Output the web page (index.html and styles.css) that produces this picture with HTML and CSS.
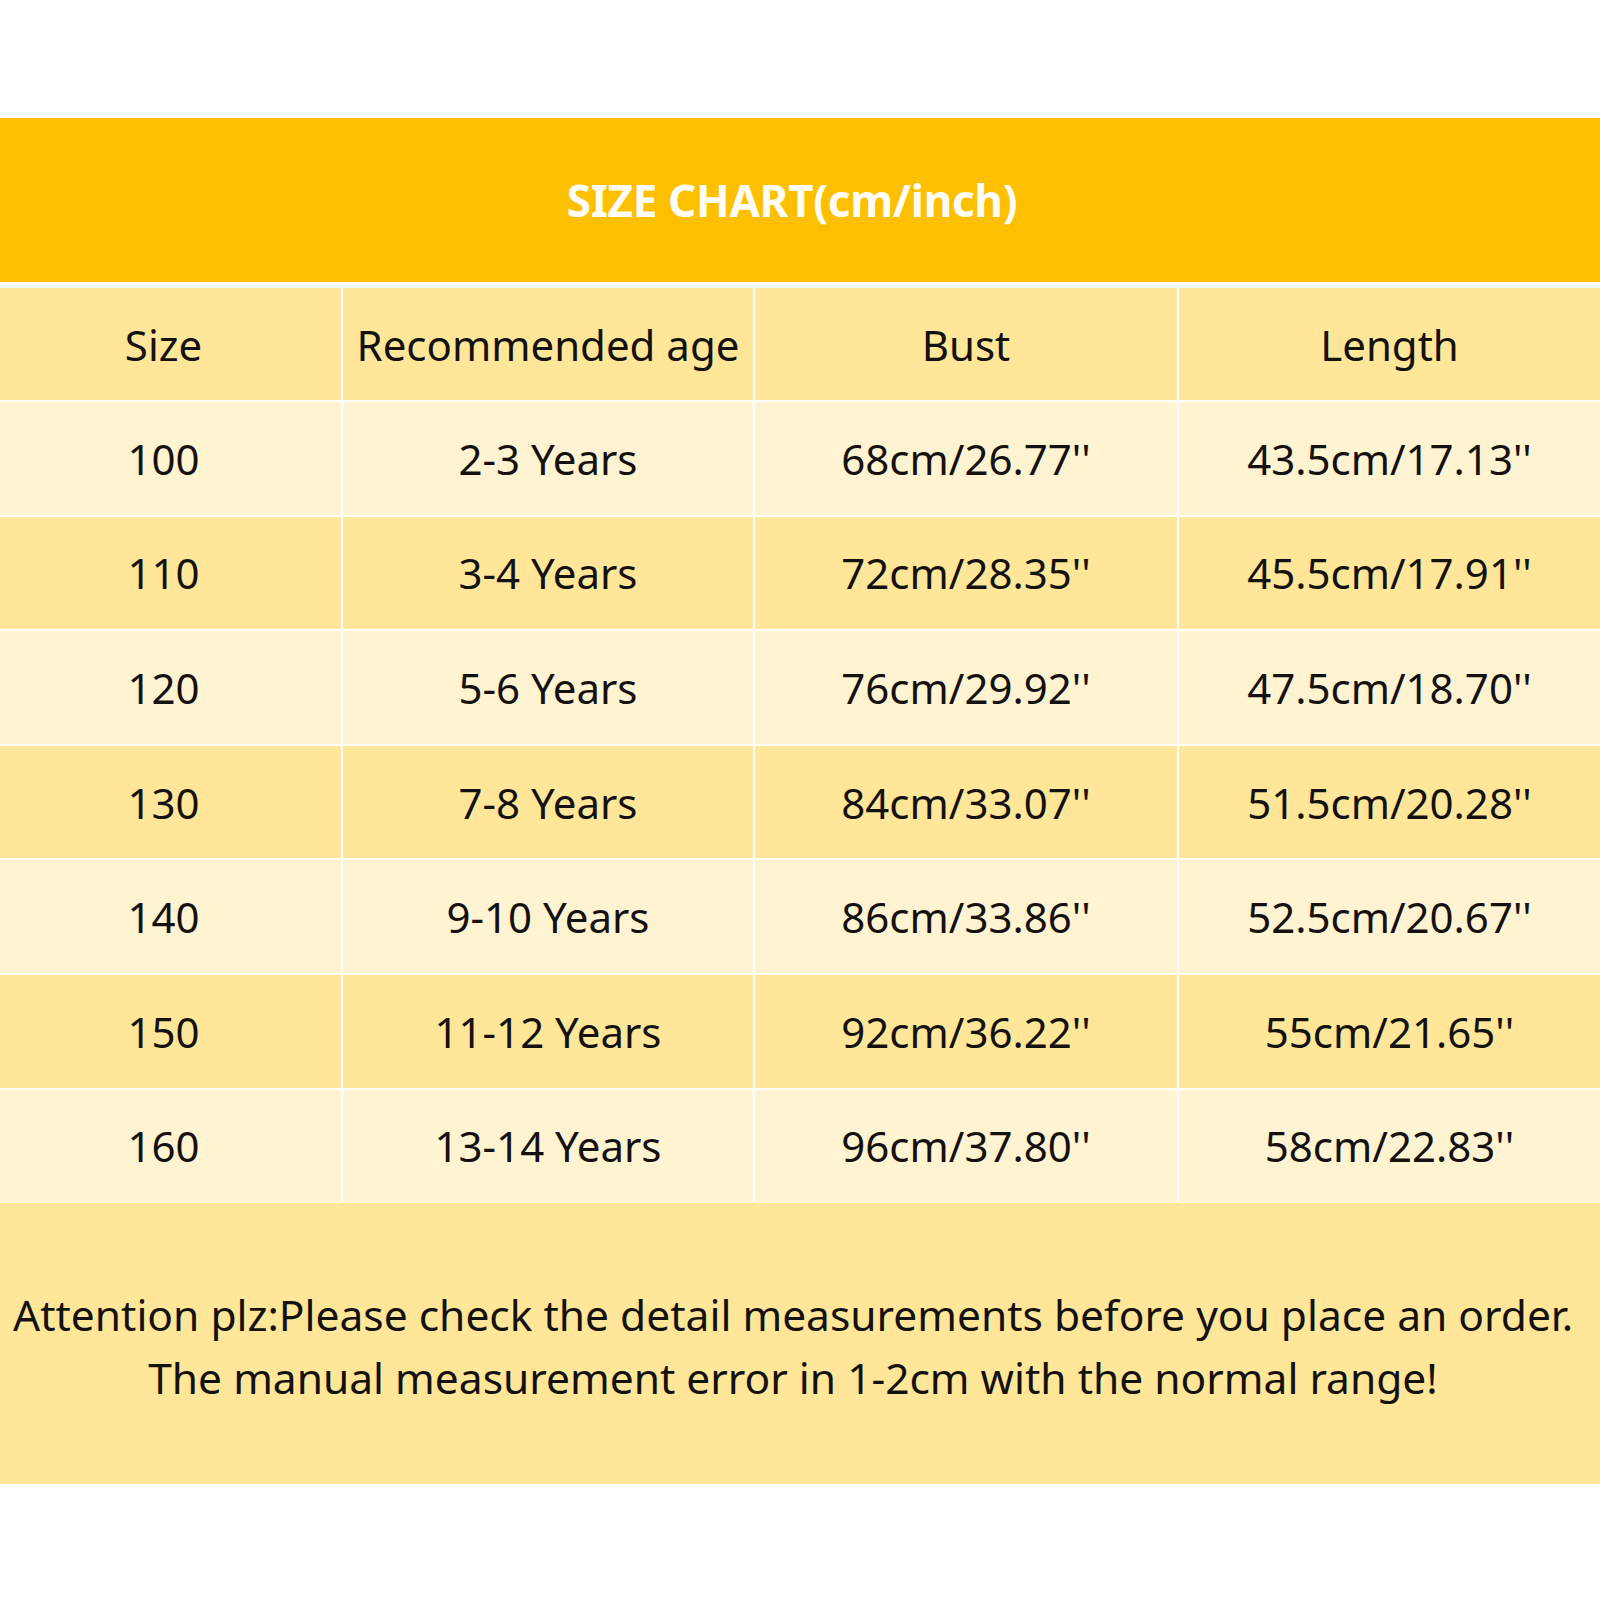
FILE: index.html
```html
<!DOCTYPE html>
<html lang="en">
<head>
<meta charset="utf-8">
<title>Size Chart</title>
<link rel="stylesheet" href="styles.css">
</head>
<body>
<div class="chart">
  <div class="title">SIZE CHART(cm/inch)</div>
  <div class="table">
    <div class="cell head first">Size</div>
    <div class="cell head">Recommended age</div>
    <div class="cell head">Bust</div>
    <div class="cell head">Length</div>

    <div class="cell light first">100</div>
    <div class="cell light">2-3 Years</div>
    <div class="cell light">68cm/26.77''</div>
    <div class="cell light">43.5cm/17.13''</div>

    <div class="cell dark first">110</div>
    <div class="cell dark">3-4 Years</div>
    <div class="cell dark">72cm/28.35''</div>
    <div class="cell dark">45.5cm/17.91''</div>

    <div class="cell light first">120</div>
    <div class="cell light">5-6 Years</div>
    <div class="cell light">76cm/29.92''</div>
    <div class="cell light">47.5cm/18.70''</div>

    <div class="cell dark first">130</div>
    <div class="cell dark">7-8 Years</div>
    <div class="cell dark">84cm/33.07''</div>
    <div class="cell dark">51.5cm/20.28''</div>

    <div class="cell light first">140</div>
    <div class="cell light">9-10 Years</div>
    <div class="cell light">86cm/33.86''</div>
    <div class="cell light">52.5cm/20.67''</div>

    <div class="cell dark first">150</div>
    <div class="cell dark">11-12 Years</div>
    <div class="cell dark">92cm/36.22''</div>
    <div class="cell dark">55cm/21.65''</div>

    <div class="cell light first">160</div>
    <div class="cell light">13-14 Years</div>
    <div class="cell light">96cm/37.80''</div>
    <div class="cell light">58cm/22.83''</div>
  </div>
  <div class="note">
    <p>Attention plz:Please check the detail measurements before you place an order.</p>
    <p>The manual measurement error in 1-2cm with the normal range!</p>
  </div>
</div>
</body>
</html>
```
FILE: styles.css
```css
html, body {
  margin: 0;
  padding: 0;
  background: #ffffff;
}

body {
  font-family: "Noto Sans", "Open Sans", sans-serif;
  color: #141210;
}

.chart {
  padding-top: 118px;
  display: flex;
  flex-direction: column;
}

.title {
  height: 164px;
  background: #fdc000;
  color: #fffdf5;
  font-weight: 700;
  font-size: 44px;
  letter-spacing: -0.3px;
  display: flex;
  align-items: center;
  justify-content: center;
  padding-right: 16px;
  margin-bottom: 6px;
}

.table {
  display: grid;
  grid-template-columns: 341px 410px 422px 1fr;
  grid-template-rows: 112px;
  grid-auto-rows: 112.6px;
  column-gap: 2px;
  row-gap: 2px;
  background: #ffffff;
}

.cell {
  display: flex;
  align-items: center;
  justify-content: center;
  font-size: 42px;
  white-space: nowrap;
}

.cell.first {
  padding-right: 14px;
}

.head {
  background: #ffe699;
}

.dark {
  background: #ffe699;
}

.light {
  background: #fff3d2;
}

.note {
  margin-top: 1px;
  height: 277px;
  background: #ffe699;
  display: flex;
  flex-direction: column;
  align-items: center;
  justify-content: center;
  font-size: 42.5px;
  padding-right: 14px;
  padding-top: 4px;
}

.note p {
  margin: 0;
  line-height: 63px;
  white-space: nowrap;
}
```
